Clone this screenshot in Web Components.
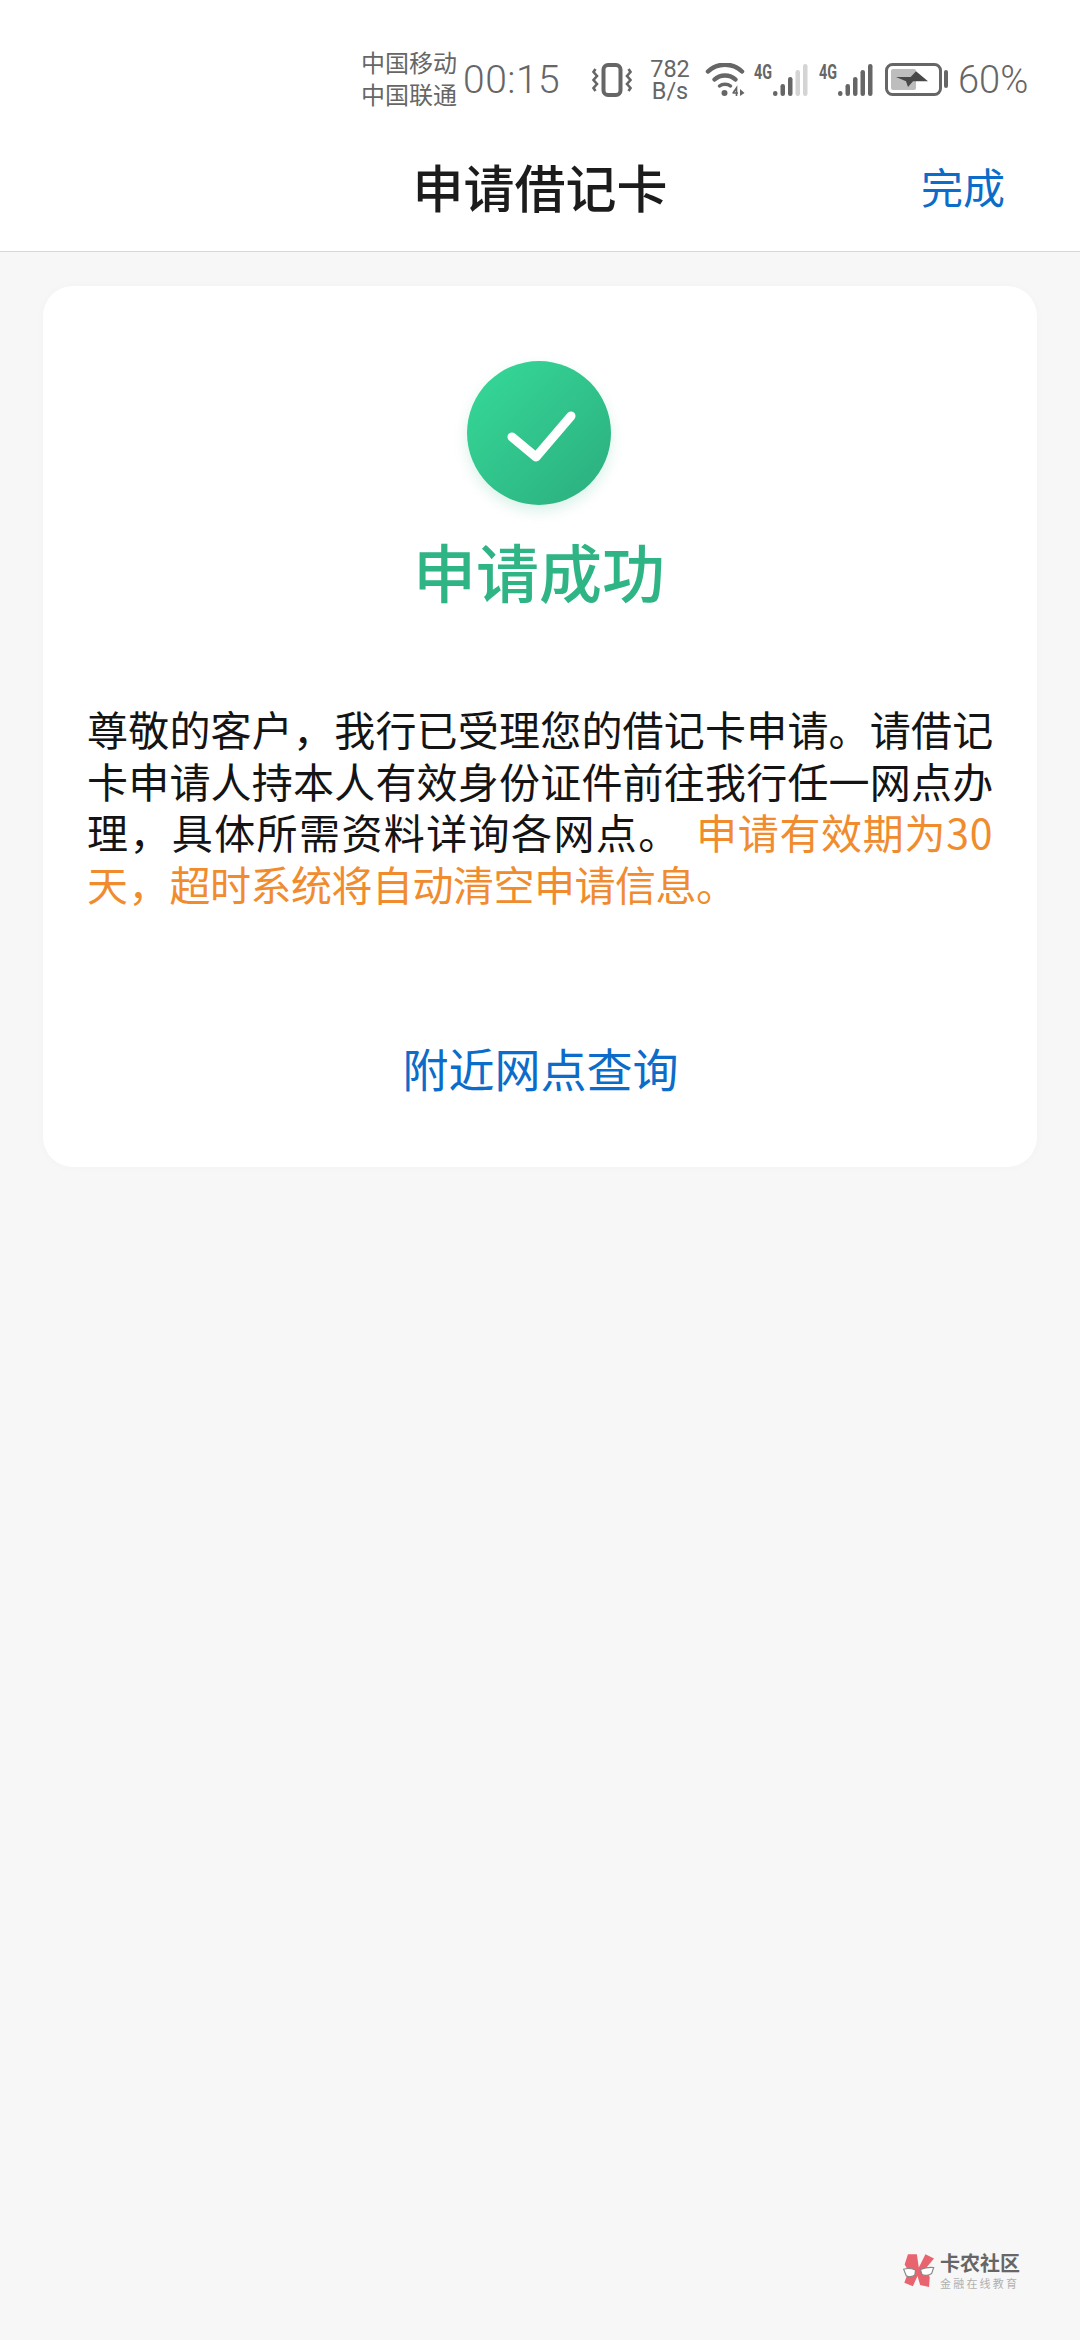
<!DOCTYPE html>
<html lang="zh">
<head>
<meta charset="utf-8">
<title>申请借记卡</title>
<style>
  html, body { margin: 0; padding: 0; height: 2340px; background: #f7f7f7; overflow: hidden; }
  body { display: flex; flex-direction: column; font-family: Roboto, "Noto Sans CJK SC", sans-serif; position: relative; }
  .wide { letter-spacing: 1.400px; }
  .warn { color: #f08c2e; margin-left: 6px; }
  .warn .a { letter-spacing: .7px; }
  .warn .b { letter-spacing: -.5px; }
</style>
</head>
<body>
<status-bar></status-bar>
<nav-bar action="完成">申请借记卡</nav-bar>
<result-card heading="申请成功" link="附近网点查询">
  尊敬的客户，我行已受理您的借记卡申请。请借记卡申请人持本人有效身份证件前往我行任一网点办<span class="wide">理，具体所需资料详询各网点。</span> <span class="warn"><span class="a">申请有效期为30</span>天，<span class="b">超时系统将自动清空申请信息。</span></span>
</result-card>
<water-mark></water-mark>

<script>
class StatusBar extends HTMLElement {
  constructor() {
    super();
    this.attachShadow({ mode: 'open' });
  }

  connectedCallback() {
    const dark = '#666';
    const light = '#d4d4d4';
    const signal = (fills) => {
      const heights = [5, 12, 19, 26, 32];
      const rects = heights.map((h, i) =>
        `<rect x="${19 + i * 7.5}" y="${33 - h}" width="4.500" height="${h}" rx="2.200" fill="${fills[i]}"/>`
      ).join('');
      return `<svg width="55" height="44" viewBox="0 -5 55 44">
        <text x="0" y="16" font-family="Roboto, sans-serif" font-size="20" font-weight="700" fill="${dark}" textLength="18" lengthAdjust="spacingAndGlyphs">4G</text>
        ${rects}
      </svg>`;
    };
    this.shadowRoot.innerHTML = `
      <style>
        :host {
          display: flex;
          justify-content: flex-end;
          align-items: center;
          height: 130px;
          padding: 30px 54px 0 0;
          box-sizing: border-box;
          background: #fff;
          color: #666;
          font-family: Roboto, "Noto Sans CJK SC", sans-serif;
        }
        .carrier { font-size: 24px; line-height: 32px; width: 96px; margin-right: 6px; white-space: nowrap; }
        .time { font-size: 39px; font-weight: 300; width: 95px; margin-right: 33px; letter-spacing: .5px; white-space: nowrap; }
        .speed { font-size: 23.500px; line-height: 22px; text-align: center; margin: 0 14px 0 16px; width: 42px; }
        svg { display: block; flex: none; }
        .s1 { margin-right: 10px; margin-left: 7px; display: flex; }
        .s2 { margin-right: 11px; display: flex; }
        .pct { font-size: 38px; font-weight: 300; margin-left: 9px; width: 68px; white-space: nowrap; }
      </style>
      <div class="carrier">中国移动<br>中国联通</div>
      <div class="time">00:15</div>
      <svg width="42" height="34" viewBox="0 0 42 34" fill="none" stroke="${dark}">
        <rect x="12.500" y="2" width="17" height="30" rx="4.500" stroke-width="4"/>
        <path d="M4.500 6L2.500 9l3.500 4-3.500 4 3.500 4-3.500 4 2 3M37.500 6l2 3-3.500 4 3.500 4-3.500 4 3.500 4-2 3" stroke-width="2.600"/>
      </svg>
      <div class="speed">782<br>B/s</div>
      <svg width="42" height="34" viewBox="0 0 42 34">
        <g fill="none" stroke="${dark}" stroke-linecap="round">
          <path d="M3 8.500C12 -0.500 28 -0.500 37 8.500" stroke-width="4.500"/>
          <path d="M9.500 16.500C15 11 25 11 30.500 16.500" stroke-width="4.500"/>
          <path d="M14.500 23C17.500 20.500 22.500 20.500 25.500 23" stroke-width="3.500"/>
        </g>
        <circle cx="19.500" cy="30" r="3" fill="${dark}"/>
        <path d="M28 30l3.500-5v8M27.500 30h5.500" fill="none" stroke="${dark}" stroke-width="1.700"/>
        <path d="M35 26l4.500 4-4.500 3z" fill="${dark}"/>
      </svg>
      <div class="s1">${signal([dark, dark, dark, light, light])}</div>
      <div class="s2">${signal([dark, dark, dark, dark, dark])}</div>
      <svg width="64" height="34" viewBox="0 0 64 34">
        <rect x="1.500" y="1.500" width="54" height="30" rx="6" fill="#fff" stroke="${dark}" stroke-width="3"/>
        <rect x="6" y="6" width="25" height="21" rx="2" fill="#bdbdbd"/>
        <path d="M11 14h14.700l5.300-5.700 12 10H28l-5 5.700-2-5.700z" fill="#484848"/>
        <rect x="59" y="7" width="4" height="18" rx="2" fill="${dark}"/>
      </svg>
      <div class="pct">60%</div>
    `;
  }
}

class NavBar extends HTMLElement {
  constructor() {
    super();
    this.attachShadow({ mode: 'open' });
  }

  connectedCallback() {
    this.shadowRoot.innerHTML = `
      <style>
        :host {
          display: grid;
          grid-template-columns: 1fr auto 1fr;
          align-items: center;
          height: 122px;
          padding-bottom: 10px;
          box-sizing: border-box;
          background: #fff;
          border-bottom: 1px solid #d8d8d8;
          font-family: "Noto Sans CJK SC", sans-serif;
        }
        .title { font-size: 51px; font-weight: 500; color: #1c1c1c; }
        .action { justify-self: end; margin-right: 75px; font-size: 42px; color: #0b6cc9; }
      </style>
      <span></span>
      <div class="title"><slot></slot></div>
      <div class="action">${this.getAttribute('action')}</div>
    `;
  }
}

class ResultCard extends HTMLElement {
  constructor() {
    super();
    this.attachShadow({ mode: 'open' });
  }

  connectedCallback() {
    this.shadowRoot.innerHTML = `
      <style>
        :host {
          display: flex;
          flex-direction: column;
          align-items: center;
          height: 881px;
          margin: 34px 43px 0;
          padding: 75px 43px 0 44px;
          box-sizing: border-box;
          background: #fff;
          border-radius: 30px;
          box-shadow: 0 0 10px rgba(0, 0, 0, .025);
          font-family: "Noto Sans CJK SC", sans-serif;
        }
        .badge {
          width: 144px;
          height: 144px;
          margin-right: 3px;
          border-radius: 50%;
          background: linear-gradient(135deg, #36da99, #2bad7e);
          box-shadow: 0 6px 14px rgba(43, 176, 127, .18);
        }
        svg { display: block; }
        h2 { margin: 24px 3px 0 0; font-size: 63px; line-height: 82px; font-weight: 500; color: #2fb585; }
        .text { margin-top: 92px; font-size: 41px; letter-spacing: .2px; line-height: 51.700px; color: #141414; width: 100%; }
        .link { margin-top: 127px; font-size: 46px; line-height: 60px; color: #0b6cc9; }
      </style>
      <div class="badge">
        <svg width="144" height="144" viewBox="0 0 144 144">
          <path d="M45 76l24 20 35-41" fill="none" stroke="#fff" stroke-width="9" stroke-linecap="round" stroke-linejoin="round"/>
        </svg>
      </div>
      <h2>${this.getAttribute('heading')}</h2>
      <div class="text"><slot></slot></div>
      <div class="link">${this.getAttribute('link')}</div>
    `;
  }
}

class WaterMark extends HTMLElement {
  constructor() {
    super();
    this.attachShadow({ mode: 'open' });
  }

  connectedCallback() {
    this.shadowRoot.innerHTML = `
      <style>
        :host {
          position: absolute;
          left: 902px;
          top: 2252px;
          display: flex;
          align-items: flex-start;
          gap: 5px;
          font-family: "Noto Sans CJK SC", sans-serif;
        }
        .name { font-size: 20px; line-height: 22px; font-weight: 700; color: #666; white-space: nowrap; }
        .sub { font-size: 11px; line-height: 14px; margin-top: 2px; color: #b0b0b0; white-space: nowrap; letter-spacing: 2.200px; }
        svg { display: block; }
      </style>
      <svg width="33" height="37" viewBox="15 20 100 110">
        <path d="M33 26h27l6 40L86 26l26 13-26 31 13 25-2 30-27-6-8-27-14 31-26-11 13-35-12-20z" fill="#e8646f"/>
        <path d="M20 71c10-3 24-2 36 2l-2 15c-6 6-20 8-26 3zM71 72c12-5 28-7 40-6l-6 18c-8 6-24 8-30 2z" fill="#fff" stroke="#888" stroke-width="3.500"/>
      </svg>
      <div>
        <div class="name">卡农社区</div>
        <div class="sub">金融在线教育</div>
      </div>
    `;
  }
}

customElements.define('status-bar', StatusBar);
customElements.define('nav-bar', NavBar);
customElements.define('result-card', ResultCard);
customElements.define('water-mark', WaterMark);
</script>
</body>
</html>
